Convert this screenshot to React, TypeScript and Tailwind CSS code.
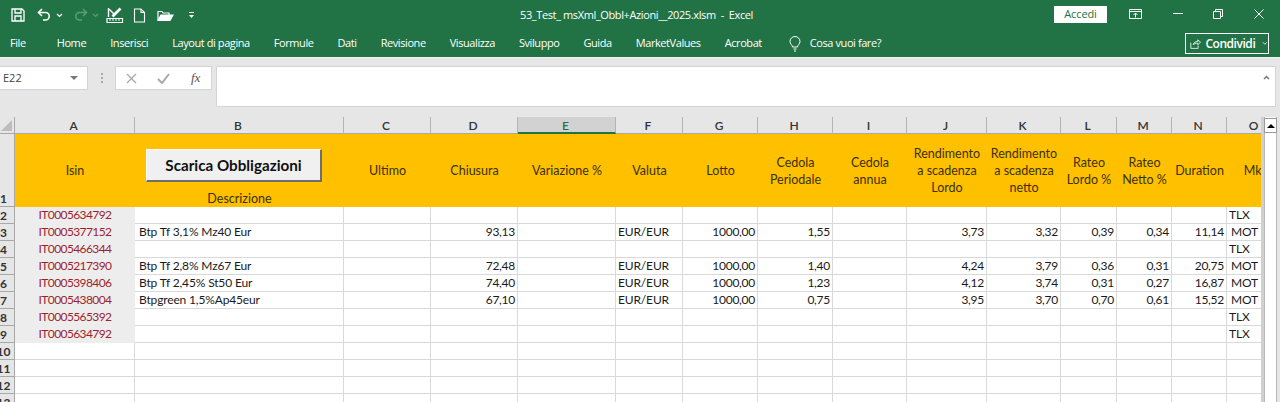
const cols = ["A", "B", "C", "D", "E", "F", "G", "H", "I", "J", "K", "L", "M", "N", "O"];

const tabs = ["Home", "Inserisci", "Layout di pagina", "Formule", "Dati", "Revisione", "Visualizza", "Sviluppo", "Guida", "MarketValues", "Acrobat"];

const gridCols = "grid shrink-0 grid-cols-[120px_209px_87px_87px_98px_67px_75px_75px_74px_80px_74px_56px_55px_55px_56px]";

const rows = [
  { n: 2, isin: "IT0005634792", mkt: "TLX" },
  { n: 3, isin: "IT0005377152", name: "Btp Tf 3,1% Mz40 Eur", close: "93,13", h: "1,55", j: "3,73", k: "3,32", l: "0,39", m: "0,34", dur: "11,14", mkt: "MOT" },
  { n: 4, isin: "IT0005466344", mkt: "TLX" },
  { n: 5, isin: "IT0005217390", name: "Btp Tf 2,8% Mz67 Eur", close: "72,48", h: "1,40", j: "4,24", k: "3,79", l: "0,36", m: "0,31", dur: "20,75", mkt: "MOT" },
  { n: 6, isin: "IT0005398406", name: "Btp Tf 2,45% St50 Eur", close: "74,40", h: "1,23", j: "4,12", k: "3,74", l: "0,31", m: "0,27", dur: "16,87", mkt: "MOT" },
  { n: 7, isin: "IT0005438004", name: "Btpgreen 1,5%Ap45eur", close: "67,10", h: "0,75", j: "3,95", k: "3,70", l: "0,70", m: "0,61", dur: "15,52", mkt: "MOT" },
  { n: 8, isin: "IT0005565392", mkt: "TLX" },
  { n: 9, isin: "IT0005634792", mkt: "TLX" },
  { n: 10 },
  { n: 11 },
  { n: 12 },
  { n: 13 },
];

function RowNum({ n, tall }: { n: number; tall?: boolean }) {
  return (
    <div className={`w-[15px] flex justify-end overflow-hidden bg-[#e6e6e6] border-r border-b border-[#a8a8a8] font-bold text-[#333] ${tall ? "h-[73px] items-end" : "h-[17px] items-center"}`}>
      <span className="w-[21px] shrink-0 text-center leading-[15px]">{n}</span>
    </div>
  );
}

function Cell({ children, right }: { children?: React.ReactNode; right?: boolean }) {
  return (
    <div className={`h-[17px] border-r border-b border-[#d9d9d9] px-[2px] leading-[16px] whitespace-nowrap overflow-hidden ${right ? "text-right tracking-[-0.25px]" : "tracking-[-0.15px]"}`}>
      {children}
    </div>
  );
}

function HeadCell({ children, bottom }: { children?: React.ReactNode; bottom?: boolean }) {
  return (
    <div className={`h-[73px] flex justify-center text-center text-[12.500px] leading-[17px] whitespace-nowrap overflow-hidden ${bottom ? "items-end" : "items-center"}`}>
      <div>{children}</div>
    </div>
  );
}

function Row({ r }: { r: (typeof rows)[number] }) {
  return (
    <div className={gridCols}>
      <div className={`h-[17px] border-b text-center leading-[16px] tracking-[-0.6px] text-[#9c1f2e] ${r.isin ? "bg-[#ededed] border-[#ededed]" : "border-r border-[#d9d9d9]"}`}>{r.isin}</div>
      <Cell>{r.name && <span className="pl-[2px]">{r.name}</span>}</Cell>
      <Cell />
      <Cell right>{r.close}</Cell>
      <Cell />
      <Cell>{r.name && "EUR/EUR"}</Cell>
      <Cell right>{r.name && "1000,00"}</Cell>
      <Cell right>{r.h}</Cell>
      <Cell />
      <Cell right>{r.j}</Cell>
      <Cell right>{r.k}</Cell>
      <Cell right>{r.l}</Cell>
      <Cell right>{r.m}</Cell>
      <Cell right>{r.dur}</Cell>
      <Cell>{r.mkt && <span className={r.mkt === "MOT" ? "pl-[2px]" : ""}>{r.mkt}</span>}</Cell>
    </div>
  );
}

function QuickBar() {
  return (
    <div className="w-[520px] flex items-center h-[30px] pl-[10px] text-white">
      <svg width="16" height="16" viewBox="0 0 16 16" fill="none" stroke="currentColor" strokeWidth="1.3">
        <path d="M2 2h10l2 2v10H2z" />
        <path d="M5 2v4h6V2M5 14V9h6v5" />
      </svg>
      <svg className="ml-[10px]" width="17" height="16" viewBox="0 0 17 16" fill="none" stroke="currentColor" strokeWidth="1.6">
        <path d="M6 2 2.500 5.500 6 9" />
        <path d="M3 5.500h6.500a3.600 3.600 0 0 1 0 7.500H7" />
      </svg>
      <svg className="ml-[3px]" width="7" height="5" viewBox="0 0 7 5" fill="none" stroke="currentColor" strokeWidth="1.2">
        <path d="m1 1 2.500 2.500L6 1" />
      </svg>
      <svg className="ml-[9px] text-[#5c9a78]" width="17" height="16" viewBox="0 0 17 16" fill="none" stroke="currentColor" strokeWidth="1.6">
        <path d="M11 2l3.500 3.500L11 9" />
        <path d="M14 5.500H7.500a3.600 3.600 0 0 0 0 7.500H10" />
      </svg>
      <svg className="ml-[3px] text-[#5c9a78]" width="7" height="5" viewBox="0 0 7 5" fill="none" stroke="currentColor" strokeWidth="1.2">
        <path d="m1 1 2.500 2.500L6 1" />
      </svg>
      <svg className="ml-[7px]" width="18" height="18" viewBox="0 0 18 18" fill="none" stroke="currentColor" strokeWidth="1.2">
        <path d="M2.500 2v9M2.500 2.500l6 6" strokeWidth="1.400" />
        <path d="m6.500 10.500 8-8" strokeWidth="2.600" />
        <path d="M1 12.500h15.500v4H1z" />
        <path d="M4 13v2M7 13v2M10 13v2M13 13v2" strokeWidth="1" />
      </svg>
      <svg className="ml-[9px]" width="13" height="15" viewBox="0 0 13 15" fill="none" stroke="currentColor" strokeWidth="1.100">
        <path d="M1.500 1h6.500l3.500 3.500v9.500h-10z" />
        <path d="M8 1v3.500h3.500" />
      </svg>
      <svg className="ml-[11px]" width="17" height="14" viewBox="0 0 17 14" fill="none" stroke="currentColor" strokeWidth="1.200">
        <path d="M1 12.500V3.500h4l1 1.500h6v2" />
        <path d="M1 12.500 4 7h12l-3 5.500z" fill="currentColor" />
      </svg>
      <svg className="ml-[14px]" width="7" height="9" viewBox="0 0 7 9" fill="currentColor">
        <path d="M1 1h5v1H1zM1 4h5L3.500 7z" />
      </svg>
    </div>
  );
}

function WindowButtons() {
  return (
    <div className="flex items-center h-[30px] ml-auto pr-[6px] text-white">
      <div className="w-[53px] h-[17px] flex items-center justify-center bg-white text-[#217346] tracking-[-0.1px] mt-[-1px]">Accedi</div>
      <div className="w-[57px] flex justify-center">
        <svg className="mt-[-2px]" width="13" height="10" viewBox="0 0 13 10" fill="none" stroke="currentColor">
          <path d="M.500.500h12v9H.500zM.500 2.500h12M6.500 8.500V4.500M4.500 6 6.500 4l2 2" />
        </svg>
      </div>
      <div className="w-[28px] flex justify-center">
        <div className="w-[10px] h-[1px] bg-white mt-[-2px]" />
      </div>
      <div className="w-[52px] flex justify-center">
        <svg className="mt-[-2px]" width="10" height="10" viewBox="0 0 10 10" fill="none" stroke="currentColor">
          <path d="M.500 2.500h7v7h-7zM2.500 2.500v-2h7v7h-2" />
        </svg>
      </div>
      <div className="w-[30px] flex justify-center">
        <svg className="mt-[-2px]" width="10" height="10" viewBox="0 0 10 10" fill="none" stroke="currentColor">
          <path d="m.500.500 9 9M9.500.500l-9 9" />
        </svg>
      </div>
    </div>
  );
}

export default function App() {
  return (
    <div className="w-[1280px] h-[402px] overflow-hidden bg-[#e6e6e6] font-['Lato','Open_Sans',sans-serif] text-[12px] text-[#1a1a1a]">
      {/* Title bar and ribbon tabs */}
      <div className="h-[58px] bg-[#217346] text-white font-['Open_Sans',sans-serif] text-[11px] tracking-[-0.42px] border-b border-[#f2f2f2]">
        <div className="flex h-[30px]">
          <QuickBar />
          <div className="pt-[7px] tracking-[-0.38px]">53_Test_ msXml_Obbl+Azioni__2025.xlsm&nbsp; -&nbsp; Excel</div>
          <WindowButtons />
        </div>
        <div className="flex items-center justify-between h-[27px]">
          <div className="flex items-center">
            <span className="ml-[10px] mr-[31px]">File</span>
            <div className="flex gap-[24px]">
              {tabs.map((t) => <span key={t}>{t}</span>)}
            </div>
            <svg className="ml-[27px]" width="12" height="16" viewBox="0 0 12 16" fill="none" stroke="currentColor">
              <path d="M3.500 11c0-2-2.500-3-2.500-5.500a5 5 0 0 1 10 0c0 2.500-2.500 3.500-2.500 5.500zM4.500 13h3M5 15h2" />
            </svg>
            <span className="ml-[9px]">Cosa vuoi fare?</span>
          </div>
          <div className="mr-[11px] w-[84px] h-[21px] border border-white flex items-center pl-[4px] text-[12px] font-semibold tracking-[-0.45px]">
            <svg width="14" height="13" viewBox="0 0 14 13" fill="none" stroke="currentColor">
              <path d="M1 5.500v7h9V9M4 8c.5-3 3-4 5.500-4V2L13 5l-3.500 3V6C7 6 5 7 4 8z" />
            </svg>
            <span className="ml-[4px]">Condividi</span>
            <svg className="ml-[7px]" width="7" height="5" viewBox="0 0 7 5" fill="none" stroke="currentColor">
              <path d="m1 1 2.500 2.500L6 1" />
            </svg>
          </div>
        </div>
      </div>

      {/* Formula bar */}
      <div className="flex pt-[8px] h-[49px] text-[#444]">
        <div className="w-[88px] h-[24px] bg-white border-y border-r border-[#d4d4d4] flex items-center justify-between pl-[3px] pr-[9px] font-['Open_Sans',sans-serif] text-[11px]">
          E22
          <div className="border-x-[4px] border-t-[4px] border-x-transparent border-t-[#777]" />
        </div>
        <div className="w-[27px] h-[24px] flex items-center justify-center gap-[2px] flex-col">
          <div className="w-[2px] h-[2px] bg-[#aaa]" />
          <div className="w-[2px] h-[2px] bg-[#aaa]" />
          <div className="w-[2px] h-[2px] bg-[#aaa]" />
        </div>
        <div className="w-[97px] h-[24px] bg-white border border-[#d4d4d4] flex items-center pl-[10px] text-[#a8a8a8]">
          <svg width="11" height="11" viewBox="0 0 11 11" fill="none" stroke="currentColor" strokeWidth="1.3">
            <path d="m1 1 9 9M10 1l-9 9" />
          </svg>
          <svg className="ml-[20px]" width="13" height="11" viewBox="0 0 13 11" fill="none" stroke="currentColor" strokeWidth="2">
            <path d="m1 6 4 4 7-9" />
          </svg>
          <span className="ml-[21px] italic text-[#555] font-['Liberation_Serif',serif] text-[13px]">fx</span>
        </div>
        <div className="ml-[4px] w-[1060px] h-[41px] bg-white border border-[#d4d4d4] rounded-[1px] flex justify-end pt-[8px] pr-[5px]">
          <svg width="7" height="5" viewBox="0 0 7 5" fill="none" stroke="#777" strokeWidth="1.5">
            <path d="m1 4 2.500-2.500L6 4" />
          </svg>
        </div>
      </div>

      <div className="h-[10px] bg-[#e6e6e6]" />

      {/* Sheet */}
      <div className="flex">
        <div className="w-[1261px] overflow-hidden">
          <div className="flex h-[17px]">
            <div className="w-[15px] bg-[#e6e6e6] border-r border-b border-[#a8a8a8] flex items-end justify-end pb-[2px] pr-[2px] shrink-0">
              <svg width="11" height="11" viewBox="0 0 11 11" fill="#bdbdbd">
                <path d="M11 0v11H0z" />
              </svg>
            </div>
            <div className={gridCols}>
              {cols.map((c) => (
                <div
                  key={c}
                  className={`h-[17px] text-center leading-[17px] font-semibold pr-[2px] border-r border-[#b5b5b5] overflow-hidden ${c === "E" ? "bg-[#d2d2d2] text-[#217346] border-b-2 border-b-[#217346]" : "bg-[#e6e6e6] text-[#333] border-b border-b-[#a8a8a8]"}`}
                >
                  {c}
                </div>
              ))}
            </div>
          </div>

          <div className="flex">
            <div className="w-[15px] shrink-0">
              <RowNum n={1} tall />
              {rows.map((r) => <RowNum key={r.n} n={r.n} />)}
            </div>
            <div className="shrink-0 bg-white">
              <div className={`${gridCols} relative bg-[#ffc000] text-[#3b3000]`}>
                <HeadCell>Isin</HeadCell>
                <HeadCell bottom>Descrizione</HeadCell>
                <HeadCell>Ultimo</HeadCell>
                <HeadCell>Chiusura</HeadCell>
                <HeadCell>Variazione %</HeadCell>
                <HeadCell>Valuta</HeadCell>
                <HeadCell>Lotto</HeadCell>
                <HeadCell>Cedola<br />Periodale</HeadCell>
                <HeadCell>Cedola<br />annua</HeadCell>
                <HeadCell>Rendimento<br />a scadenza<br />Lordo</HeadCell>
                <HeadCell>Rendimento<br />a scadenza<br />netto</HeadCell>
                <HeadCell>Rateo<br />Lordo %</HeadCell>
                <HeadCell>Rateo<br />Netto %</HeadCell>
                <HeadCell>Duration</HeadCell>
                <HeadCell>Mkt</HeadCell>
                {/* Form button sitting on top of the sheet */}
                <div className="absolute left-[131px] top-[15px] w-[176px] h-[33px] flex items-center justify-center bg-[#f0f0f0] border-t border-l border-t-white border-l-white border-b-2 border-r-2 border-b-[#6e6e6e] border-r-[#6e6e6e] text-[15.2px] font-bold text-[#111]">
                  Scarica Obbligazioni
                </div>
              </div>
              {rows.map((r) => <Row key={r.n} r={r} />)}
            </div>
          </div>
        </div>

        {/* Vertical scrollbar */}
        <div className="w-[19px] h-[285px] flex">
          <div className="w-[3px] bg-[#d0d0d0]" />
          <div className="w-[13px] bg-white border-x border-[#b8b8b8]">
            <div className="h-[15px] mx-[-1px] mt-[1px] bg-white border border-[#9a9a9a] flex items-center justify-center">
              <div className="border-x-[4px] border-b-[4px] border-x-transparent border-b-black" />
            </div>
          </div>
        </div>
      </div>
    </div>
  );
}
